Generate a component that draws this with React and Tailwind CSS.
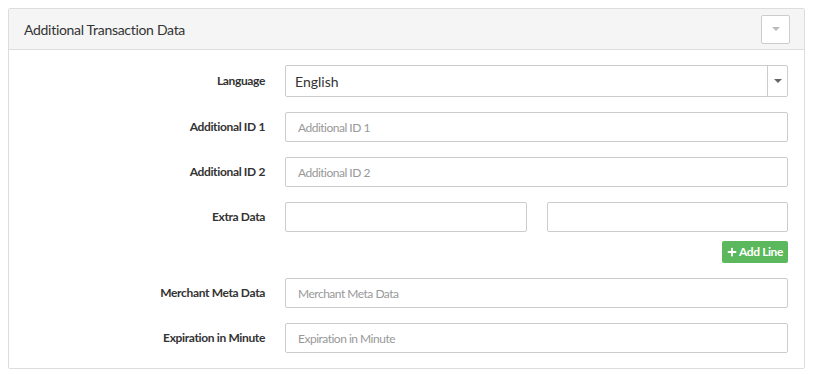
import { FaPlus } from 'react-icons/fa';

const font = { fontFamily: '"Source Sans Pro", Lato, "Open Sans", sans-serif' };

const Caret = ({ className }) => (
  <svg width="8" height="4" viewBox="0 0 8 4" className={className}>
    <path d="M0 0 L8 0 L4 4 Z" fill="currentColor" />
  </svg>
);

const Row = ({ label, children }) => (
  <div className="grid grid-cols-[256px_1fr] items-center gap-x-5">
    <label className="text-right text-[12px] font-bold tracking-[-0.35px] text-[#333]">{label}</label>
    <div>{children}</div>
  </div>
);

const inputCls =
  'h-[30px] w-full rounded-[2px] border border-[#ccc] bg-white px-3 text-[12px] tracking-[-0.5px] text-[#333] placeholder:text-[#999] outline-none';

export default function App() {
  return (
    <div className="min-h-screen bg-white p-2" style={font}>
      <div className="w-[797px] rounded-[2px] border border-[#ddd] bg-white">
        {/* Header */}
        <div className="flex h-[41px] items-center justify-between border-b border-[#ddd] bg-[#f5f5f5] pl-[15px] pr-[14px]">
          <h3 className="text-[14px] tracking-[-0.3px] text-[#333]">Additional Transaction Data</h3>
          <button className="flex h-[29px] w-[29px] items-center justify-center rounded-[2px] border border-[#ccc] bg-white text-[#bbb]">
            <Caret />
          </button>
        </div>

        {/* Body */}
        <div className="flex flex-col gap-[15px] pt-[15px] pb-[15px] pr-[16px]">
          <Row label="Language">
            <div className="flex h-[32px] w-full items-center rounded-[2px] border border-[#ccc] bg-white">
              <span className="flex-1 px-[9px] text-[14px] text-[#333]">English</span>
              <span className="flex h-full w-[20px] items-center justify-center border-l border-[#ccc] text-[#666]">
                <Caret />
              </span>
            </div>
          </Row>
          <Row label="Additional ID 1">
            <input className={inputCls} placeholder="Additional ID 1" />
          </Row>
          <Row label="Additional ID 2">
            <input className={inputCls} placeholder="Additional ID 2" />
          </Row>
          <div className="flex flex-col gap-[9px]">
            <Row label="Extra Data">
              <div className="grid grid-cols-2 gap-5">
                <input className={inputCls} />
                <input className={inputCls} />
              </div>
            </Row>
            <div className="flex justify-end">
              <button className="flex h-[22px] items-center gap-[2px] rounded-[2px] bg-[#5cb85c] px-[5px] text-[12px] font-bold tracking-[-0.4px] text-white">
                <FaPlus size={10} />
                Add Line
              </button>
            </div>
          </div>
          <Row label="Merchant Meta Data">
            <input className={inputCls} placeholder="Merchant Meta Data" />
          </Row>
          <Row label="Expiration in Minute">
            <input className={inputCls} placeholder="Expiration in Minute" />
          </Row>
        </div>
      </div>
    </div>
  );
}
